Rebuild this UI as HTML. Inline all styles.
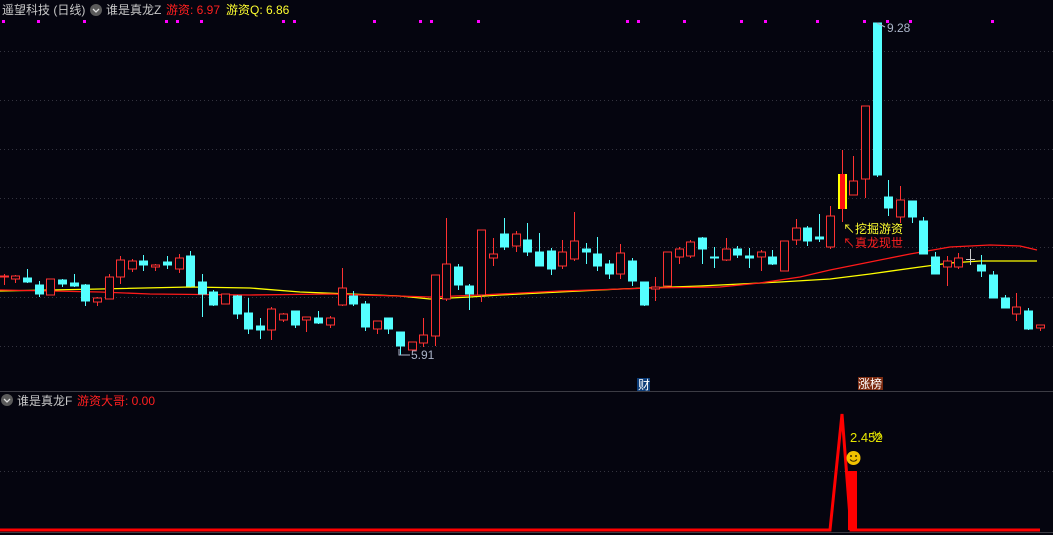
<!DOCTYPE html>
<html><head><meta charset="utf-8"><style>
html,body{margin:0;padding:0;background:#05050f;width:1053px;height:535px;overflow:hidden}
svg{display:block}
text{font-family:"Liberation Sans","Noto Sans CJK SC",sans-serif}
</style></head><body>
<svg width="1053" height="535" viewBox="0 0 1053 535" xmlns="http://www.w3.org/2000/svg">
<rect width="1053" height="535" fill="#05050f"/>
<g stroke="#34343f" stroke-dasharray="1,3" stroke-width="1">
<line x1="0" x2="1053" y1="51.5" y2="51.5"/><line x1="0" x2="1053" y1="100.5" y2="100.5"/>
<line x1="0" x2="1053" y1="149.5" y2="149.5"/><line x1="0" x2="1053" y1="198.5" y2="198.5"/>
<line x1="0" x2="1053" y1="247.5" y2="247.5"/><line x1="0" x2="1053" y1="297.5" y2="297.5"/>
<line x1="0" x2="1053" y1="346.5" y2="346.5"/><line x1="0" x2="1053" y1="471.5" y2="471.5"/>
</g>
<line x1="0" x2="1053" y1="391.5" y2="391.5" stroke="#3c3c44"/>
<line x1="0" x2="1053" y1="532.5" y2="532.5" stroke="#3c3c44"/>
<g fill="#ff00ff">
<rect x="2" y="20" width="3" height="3"/><rect x="37" y="20" width="3" height="3"/><rect x="83" y="20" width="3" height="3"/>
<rect x="165" y="20" width="3" height="3"/><rect x="176" y="20" width="3" height="3"/><rect x="200" y="20" width="3" height="3"/>
<rect x="282" y="20" width="3" height="3"/><rect x="293" y="20" width="3" height="3"/><rect x="373" y="20" width="3" height="3"/>
<rect x="419" y="20" width="3" height="3"/><rect x="430" y="20" width="3" height="3"/><rect x="477" y="20" width="3" height="3"/>
<rect x="626" y="20" width="3" height="3"/><rect x="637" y="20" width="3" height="3"/><rect x="683" y="20" width="3" height="3"/>
<rect x="740" y="20" width="3" height="3"/><rect x="764" y="20" width="3" height="3"/><rect x="816" y="20" width="3" height="3"/>
<rect x="863" y="20" width="3" height="3"/><rect x="886" y="20" width="3" height="3"/><rect x="909" y="20" width="3" height="3"/>
<rect x="991" y="20" width="3" height="3"/>
</g>
<polyline fill="none" stroke="#ffff00" stroke-width="1.3" points="0,291 100,289 190,287 250,288 300,292 400,296 430,299 470,297 500,295 560,292 620,289 700,286 780,282 830,279 870,274 920,267 950,263 980,261 1037,261"/>
<polyline fill="none" stroke="#ff1a1a" stroke-width="1.3" points="0,290 100,292 150,294 250,295 330,294 430,297 480,295 560,291 650,288 720,287 760,283 800,277 830,270 870,262 910,254 950,247 990,245 1020,246 1037,250"/>
<g stroke-width="1">
<g stroke="#ff3232" fill="#05050f">
<line x1="4.5" x2="4.5" y1="274" y2="285"/><rect x="0.5" y="276" width="8" height="1"/>
<line x1="15.5" x2="15.5" y1="275" y2="283"/><rect x="11.5" y="276" width="8" height="3"/>
<line x1="50.5" x2="50.5" y1="279" y2="295"/><rect x="46.5" y="279" width="8" height="16"/>
<line x1="97.5" x2="97.5" y1="297" y2="306"/><rect x="93.5" y="298" width="8" height="4"/>
<line x1="109.5" x2="109.5" y1="274" y2="299"/><rect x="105.5" y="277" width="8" height="22"/>
<line x1="120.5" x2="120.5" y1="256" y2="284"/><rect x="116.5" y="260" width="8" height="17"/>
<line x1="132.5" x2="132.5" y1="259" y2="272"/><rect x="128.5" y="261" width="8" height="8"/>
<line x1="155.5" x2="155.5" y1="264" y2="271"/><rect x="151.5" y="265" width="8" height="2"/>
<line x1="179.5" x2="179.5" y1="254" y2="273"/><rect x="175.5" y="258" width="8" height="11"/>
<line x1="225.5" x2="225.5" y1="294" y2="304"/><rect x="221.5" y="294" width="8" height="10"/>
<line x1="271.5" x2="271.5" y1="307" y2="340"/><rect x="267.5" y="309" width="8" height="21"/>
<line x1="283.5" x2="283.5" y1="313" y2="322"/><rect x="279.5" y="314" width="8" height="6"/>
<line x1="306.5" x2="306.5" y1="317" y2="332"/><rect x="302.5" y="317" width="8" height="3"/>
<line x1="330.5" x2="330.5" y1="316" y2="328"/><rect x="326.5" y="318" width="8" height="7"/>
<line x1="342.5" x2="342.5" y1="268" y2="306"/><rect x="338.5" y="288" width="8" height="17"/>
<line x1="377.5" x2="377.5" y1="321" y2="334"/><rect x="373.5" y="321" width="8" height="8"/>
<line x1="412.5" x2="412.5" y1="342" y2="350"/><rect x="408.5" y="342" width="8" height="8"/>
<line x1="423.5" x2="423.5" y1="318" y2="347"/><rect x="419.5" y="335" width="8" height="8"/>
<line x1="435.5" x2="435.5" y1="275" y2="346"/><rect x="431.5" y="275" width="8" height="61"/>
<line x1="446.5" x2="446.5" y1="218" y2="301"/><rect x="442.5" y="264" width="8" height="35"/>
<line x1="481.5" x2="481.5" y1="230" y2="302"/><rect x="477.5" y="230" width="8" height="65"/>
<line x1="493.5" x2="493.5" y1="238" y2="266"/><rect x="489.5" y="254" width="8" height="4"/>
<line x1="516.5" x2="516.5" y1="231" y2="252"/><rect x="512.5" y="234" width="8" height="12"/>
<line x1="562.5" x2="562.5" y1="240" y2="269"/><rect x="558.5" y="252" width="8" height="14"/>
<line x1="574.5" x2="574.5" y1="212" y2="261"/><rect x="570.5" y="241" width="8" height="18"/>
<line x1="620.5" x2="620.5" y1="244" y2="279"/><rect x="616.5" y="253" width="8" height="21"/>
<line x1="655.5" x2="655.5" y1="277" y2="301"/><rect x="651.5" y="287" width="8" height="2"/>
<line x1="667.5" x2="667.5" y1="252" y2="286"/><rect x="663.5" y="252" width="8" height="34"/>
<line x1="679.5" x2="679.5" y1="247" y2="264"/><rect x="675.5" y="249" width="8" height="8"/>
<line x1="690.5" x2="690.5" y1="240" y2="258"/><rect x="686.5" y="242" width="8" height="14"/>
<line x1="726.5" x2="726.5" y1="238" y2="261"/><rect x="722.5" y="249" width="8" height="11"/>
<line x1="761.5" x2="761.5" y1="250" y2="271"/><rect x="757.5" y="252" width="8" height="5"/>
<line x1="784.5" x2="784.5" y1="241" y2="271"/><rect x="780.5" y="241" width="8" height="30"/>
<line x1="796.5" x2="796.5" y1="219" y2="245"/><rect x="792.5" y="228" width="8" height="12"/>
<line x1="830.5" x2="830.5" y1="206" y2="249"/><rect x="826.5" y="216" width="8" height="31"/>
<line x1="842.5" x2="842.5" y1="150" y2="222"/>
<line x1="853.5" x2="853.5" y1="156" y2="195"/><rect x="849.5" y="181" width="8" height="14"/>
<line x1="865.5" x2="865.5" y1="106" y2="198"/><rect x="861.5" y="106" width="8" height="73"/>
<line x1="900.5" x2="900.5" y1="186" y2="223"/><rect x="896.5" y="200" width="8" height="17"/>
<line x1="947.5" x2="947.5" y1="256" y2="286"/><rect x="943.5" y="261" width="8" height="6"/>
<line x1="958.5" x2="958.5" y1="253" y2="269"/><rect x="954.5" y="258" width="8" height="9"/>
<line x1="1016.5" x2="1016.5" y1="293" y2="321"/><rect x="1012.5" y="307" width="8" height="7"/>
<line x1="1040.5" x2="1040.5" y1="325" y2="331"/><rect x="1036.5" y="325" width="8" height="3"/>
</g>
<rect x="838" y="174" width="9" height="35" fill="#ffff00"/><rect x="840" y="174" width="5" height="35" fill="#ff1010"/>
<g stroke="#54ffff" fill="#54ffff">
<line x1="27.5" x2="27.5" y1="269" y2="283"/><rect x="23.5" y="278" width="8" height="4"/>
<line x1="39.5" x2="39.5" y1="281" y2="297"/><rect x="35.5" y="285" width="8" height="9"/>
<line x1="62.5" x2="62.5" y1="279" y2="287"/><rect x="58.5" y="280" width="8" height="4"/>
<line x1="74.5" x2="74.5" y1="274" y2="287"/><rect x="70.5" y="283" width="8" height="3"/>
<line x1="85.5" x2="85.5" y1="284" y2="306"/><rect x="81.5" y="285" width="8" height="16"/>
<line x1="143.5" x2="143.5" y1="255" y2="271"/><rect x="139.5" y="261" width="8" height="4"/>
<line x1="167.5" x2="167.5" y1="256" y2="269"/><rect x="163.5" y="262" width="8" height="3"/>
<line x1="190.5" x2="190.5" y1="251" y2="287"/><rect x="186.5" y="256" width="8" height="30"/>
<line x1="202.5" x2="202.5" y1="274" y2="317"/><rect x="198.5" y="282" width="8" height="12"/>
<line x1="213.5" x2="213.5" y1="290" y2="306"/><rect x="209.5" y="292" width="8" height="13"/>
<line x1="237.5" x2="237.5" y1="295" y2="319"/><rect x="233.5" y="296" width="8" height="18"/>
<line x1="248.5" x2="248.5" y1="298" y2="334"/><rect x="244.5" y="313" width="8" height="16"/>
<line x1="260.5" x2="260.5" y1="318" y2="339"/><rect x="256.5" y="326" width="8" height="4"/>
<line x1="295.5" x2="295.5" y1="311" y2="328"/><rect x="291.5" y="311" width="8" height="14"/>
<line x1="318.5" x2="318.5" y1="311" y2="324"/><rect x="314.5" y="318" width="8" height="5"/>
<line x1="353.5" x2="353.5" y1="291" y2="306"/><rect x="349.5" y="296" width="8" height="8"/>
<line x1="365.5" x2="365.5" y1="301" y2="331"/><rect x="361.5" y="304" width="8" height="23"/>
<line x1="388.5" x2="388.5" y1="318" y2="334"/><rect x="384.5" y="318" width="8" height="11"/>
<line x1="400.5" x2="400.5" y1="332" y2="355"/><rect x="396.5" y="332" width="8" height="14"/>
<line x1="458.5" x2="458.5" y1="264" y2="290"/><rect x="454.5" y="267" width="8" height="18"/>
<line x1="469.5" x2="469.5" y1="284" y2="310"/><rect x="465.5" y="286" width="8" height="8"/>
<line x1="504.5" x2="504.5" y1="218" y2="250"/><rect x="500.5" y="234" width="8" height="13"/>
<line x1="527.5" x2="527.5" y1="223" y2="256"/><rect x="523.5" y="240" width="8" height="12"/>
<line x1="539.5" x2="539.5" y1="233" y2="266"/><rect x="535.5" y="252" width="8" height="14"/>
<line x1="551.5" x2="551.5" y1="248" y2="275"/><rect x="547.5" y="251" width="8" height="18"/>
<line x1="586.5" x2="586.5" y1="243" y2="264"/><rect x="582.5" y="249" width="8" height="3"/>
<line x1="597.5" x2="597.5" y1="237" y2="271"/><rect x="593.5" y="254" width="8" height="12"/>
<line x1="609.5" x2="609.5" y1="260" y2="279"/><rect x="605.5" y="264" width="8" height="10"/>
<line x1="632.5" x2="632.5" y1="258" y2="286"/><rect x="628.5" y="261" width="8" height="20"/>
<line x1="644.5" x2="644.5" y1="282" y2="306"/><rect x="640.5" y="282" width="8" height="23"/>
<line x1="702.5" x2="702.5" y1="237" y2="264"/><rect x="698.5" y="238" width="8" height="11"/>
<line x1="714.5" x2="714.5" y1="247" y2="268"/><rect x="710.5" y="257" width="8" height="1"/>
<line x1="737.5" x2="737.5" y1="246" y2="258"/><rect x="733.5" y="249" width="8" height="6"/>
<line x1="749.5" x2="749.5" y1="248" y2="268"/><rect x="745.5" y="256" width="8" height="2"/>
<line x1="772.5" x2="772.5" y1="250" y2="265"/><rect x="768.5" y="257" width="8" height="7"/>
<line x1="807.5" x2="807.5" y1="226" y2="246"/><rect x="803.5" y="228" width="8" height="13"/>
<line x1="819.5" x2="819.5" y1="214" y2="242"/><rect x="815.5" y="237" width="8" height="2"/>
<line x1="877.5" x2="877.5" y1="23" y2="177"/><rect x="873.5" y="23" width="8" height="152"/>
<line x1="888.5" x2="888.5" y1="180" y2="216"/><rect x="884.5" y="197" width="8" height="11"/>
<line x1="912.5" x2="912.5" y1="201" y2="223"/><rect x="908.5" y="201" width="8" height="16"/>
<line x1="923.5" x2="923.5" y1="217" y2="254"/><rect x="919.5" y="221" width="8" height="33"/>
<line x1="935.5" x2="935.5" y1="252" y2="274"/><rect x="931.5" y="257" width="8" height="17"/>
<line x1="981.5" x2="981.5" y1="255" y2="277"/><rect x="977.5" y="265" width="8" height="6"/>
<line x1="993.5" x2="993.5" y1="271" y2="298"/><rect x="989.5" y="275" width="8" height="23"/>
<line x1="1005.5" x2="1005.5" y1="295" y2="308"/><rect x="1001.5" y="298" width="8" height="10"/>
<line x1="1028.5" x2="1028.5" y1="308" y2="330"/><rect x="1024.5" y="311" width="8" height="18"/>
</g>
<g stroke="#c8c8c8"><line x1="970.5" x2="970.5" y1="249" y2="265"/><line x1="966" x2="975" y1="259.5" y2="259.5"/></g>
</g>
<text x="2" y="14" font-size="12" fill="#c8c8c8">遥望科技 (日线)</text>
<circle cx="96" cy="10" r="6" fill="#5a5a5a"/><path d="M93 9 L96 12 L99 9" stroke="#ddd" stroke-width="1.3" fill="none"/>
<text x="106" y="14" font-size="12" fill="#c8c8c8">谁是真龙Z</text>
<text x="166" y="14" font-size="12" fill="#ff2020">游资: 6.97</text>
<text x="226" y="14" font-size="12" fill="#ffff30">游资Q: 6.86</text>
<path d="M877 23 L885 27" stroke="#aab4c8" fill="none"/>
<text x="887" y="32" font-size="12" fill="#aab4c8">9.28</text>
<path d="M399 349 L399 355 L410 355" stroke="#aab4c8" fill="none"/>
<text x="411" y="359" font-size="12" fill="#aab4c8">5.91</text>
<text x="843" y="233" font-size="12" fill="#ffff30">↖挖掘游资</text>
<text x="843" y="247" font-size="12" fill="#ff2020">↖真龙现世</text>
<rect x="637" y="378" width="13" height="13" fill="#0c3c78"/>
<text x="638" y="389" font-size="12" fill="#ffffff">财</text>
<rect x="858" y="377" width="25" height="13" fill="#7a2a10"/>
<text x="858" y="388" font-size="12" fill="#ffffff">涨榜</text>
<circle cx="7" cy="400" r="6" fill="#5a5a5a"/><path d="M4 399 L7 402 L10 399" stroke="#ddd" stroke-width="1.3" fill="none"/>
<text x="17" y="405" font-size="12" fill="#c8c8c8">谁是真龙F</text>
<text x="77" y="405" font-size="12" fill="#ff2020">游资大哥: 0.00</text>
<polyline fill="none" stroke="#ff0000" stroke-width="3" points="0,530 830,530 842,414 851,530 1040,530"/>
<rect x="848" y="471" width="9" height="59" fill="#ff0000"/>
<text x="850" y="442" font-size="13" fill="#e6e600">2.452</text>
<text x="872" y="440" font-size="12" fill="#e6e600">%</text>
<circle cx="853.5" cy="458" r="7" fill="#f2c200"/>
<circle cx="851" cy="456" r="1" fill="#3a2a00"/><circle cx="856" cy="456" r="1" fill="#3a2a00"/>
<path d="M850 459.5 Q853.5 463 857 459.5" stroke="#3a2a00" fill="none" stroke-width="1"/>
</svg>
</body></html>
